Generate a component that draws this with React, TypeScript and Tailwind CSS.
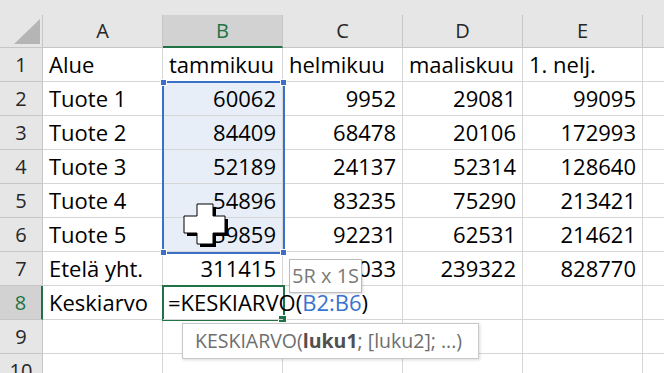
const cols = ["A", "B", "C", "D", "E", "F"];

type Cell = { v: string; num?: boolean };

const rows: Cell[][] = [
  [{ v: "Alue" }, { v: "tammikuu" }, { v: "helmikuu" }, { v: "maaliskuu" }, { v: "1. nelj." }],
  [{ v: "Tuote 1" }, { v: "60062", num: true }, { v: "9952", num: true }, { v: "29081", num: true }, { v: "99095", num: true }],
  [{ v: "Tuote 2" }, { v: "84409", num: true }, { v: "68478", num: true }, { v: "20106", num: true }, { v: "172993", num: true }],
  [{ v: "Tuote 3" }, { v: "52189", num: true }, { v: "24137", num: true }, { v: "52314", num: true }, { v: "128640", num: true }],
  [{ v: "Tuote 4" }, { v: "54896", num: true }, { v: "83235", num: true }, { v: "75290", num: true }, { v: "213421", num: true }],
  [{ v: "Tuote 5" }, { v: "59859", num: true }, { v: "92231", num: true }, { v: "62531", num: true }, { v: "214621", num: true }],
  [{ v: "Etelä yht." }, { v: "311415", num: true }, { v: "278033", num: true }, { v: "239322", num: true }, { v: "828770", num: true }],
  [{ v: "Keskiarvo" }],
  [],
  [],
];

const font = { fontFamily: '"Open Sans", "Noto Sans", sans-serif' };

export default function App() {
  return (
    <div
      className="relative w-[664px] h-[373px] overflow-hidden bg-white text-black"
      style={font}
    >
      {/* strip above the column headers */}
      <div className="h-[15px] bg-[#e6e6e6]" />

      <div className="grid grid-cols-[43px_repeat(6,120px)]">
        {/* column headers */}
        <div className="relative h-[33px] bg-[#e6e6e6] border-r border-b border-[#c6c6c6]">
          <svg className="absolute left-0 top-0" width="43" height="33" viewBox="0 0 43 33">
            <polygon points="14,29 40,29 40,4" fill="#b5b5b5" />
          </svg>
        </div>
        {cols.map((c) => (
          <div
            key={c}
            className={
              c === "B"
                ? "h-[33px] flex items-center justify-center text-[20px] bg-[#d2d2d2] text-[#217346] border-r border-[#c6c6c6] border-b-2 border-b-[#217346]"
                : "h-[33px] flex items-center justify-center text-[20px] bg-[#e6e6e6] text-[#262626] border-r border-b border-[#c6c6c6]"
            }
          >
            {c}
          </div>
        ))}

        {/* rows */}
        {rows.map((r, i) => (
          <Row key={i} n={i + 1} cells={r} />
        ))}
      </div>

      {/* selection B2:B6 */}
      <div className="absolute left-[162px] top-[81px] w-[123px] h-[173px] border-2 border-[#3a70c8]">
        <div className="absolute -left-[4px] -top-[4px] w-[7px] h-[7px] bg-[#3a70c8] border border-white" />
        <div className="absolute -right-[4px] -top-[4px] w-[7px] h-[7px] bg-[#3a70c8] border border-white" />
        <div className="absolute -left-[4px] -bottom-[4px] w-[7px] h-[7px] bg-[#3a70c8] border border-white" />
        <div className="absolute -right-[4px] -bottom-[4px] w-[7px] h-[7px] bg-[#3a70c8] border border-white" />
      </div>

      {/* active cell B8 */}
      <div className="absolute left-[162px] top-[285px] w-[123px] h-[36px] border-2 border-[#217346]">
        <div className="absolute -right-[4px] -bottom-[4px] w-[9px] h-[8px] bg-[#217346] border border-white" />
      </div>

      {/* size tooltip */}
      <div className="absolute left-[289px] top-[259px] w-[73px] h-[34px] bg-white border border-[#bcbcbc] shadow-[1px_1px_2px_rgba(0,0,0,0.15)] flex items-center pl-[2px] text-[20px] text-[#7a7a7a] whitespace-nowrap">
        5R x 1S
      </div>

      {/* function tooltip */}
      <div className="absolute left-[182px] top-[323px] w-[297px] h-[36px] bg-white border border-[#c8c8c8] shadow-[1px_1px_3px_rgba(0,0,0,0.15)] flex items-center pl-[12px] text-[19.5px] text-[#6e6e6e] whitespace-nowrap">
        KESKIARVO(<span className="font-bold text-[#505050]">luku1</span>; [luku2]; ...)
      </div>

      {/* move cursor */}
      <svg className="absolute left-[183px] top-[203px]" width="48" height="48" viewBox="0 0 48 48">
        <path d="M17 4H33V16H45V33H33V44H17V33H4V16H17Z" fill="#000" />
        <path d="M14 1H30V13H42V30H30V41H14V30H1V13H14Z" fill="#fff" stroke="#000" strokeWidth="1" />
      </svg>
    </div>
  );
}

function Row({ n, cells }: { n: number; cells: Cell[] }) {
  const sel = n === 8;
  return (
    <>
      <div
        className={
          sel
            ? "h-[34px] flex items-end justify-center pb-[1px] text-[20px] bg-[#d2d2d2] text-[#217346] border-b border-[#c6c6c6] border-r-2 border-r-[#217346]"
            : "h-[34px] flex items-end justify-center pb-[1px] text-[20px] bg-[#e6e6e6] text-[#262626] border-r border-b border-[#c6c6c6]"
        }
      >
        {n}
      </div>
      {cols.map((c, j) => {
        const cell = cells[j];
        const hl = c === "B" && n >= 2 && n <= 6;
        if (n === 8 && c === "B") {
          return (
            <div
              key={c}
              className="relative z-10 h-[34px] flex items-end px-[5px] text-[22px] whitespace-nowrap overflow-visible border-b border-[#d6d6d6]"
            >
              =KESKIARVO(<span className="text-[#3b73d0]">B2:B6</span>)
            </div>
          );
        }
        return (
          <div
            key={c}
            className={
              "h-[34px] flex items-end px-[6px] text-[22px] whitespace-nowrap border-r border-b border-[#d6d6d6] " +
              (cell?.num ? "justify-end " : "justify-start ") +
              (hl ? "bg-[#e8eef8]" : "bg-white")
            }
          >
            {cell?.v}
          </div>
        );
      })}
    </>
  );
}
